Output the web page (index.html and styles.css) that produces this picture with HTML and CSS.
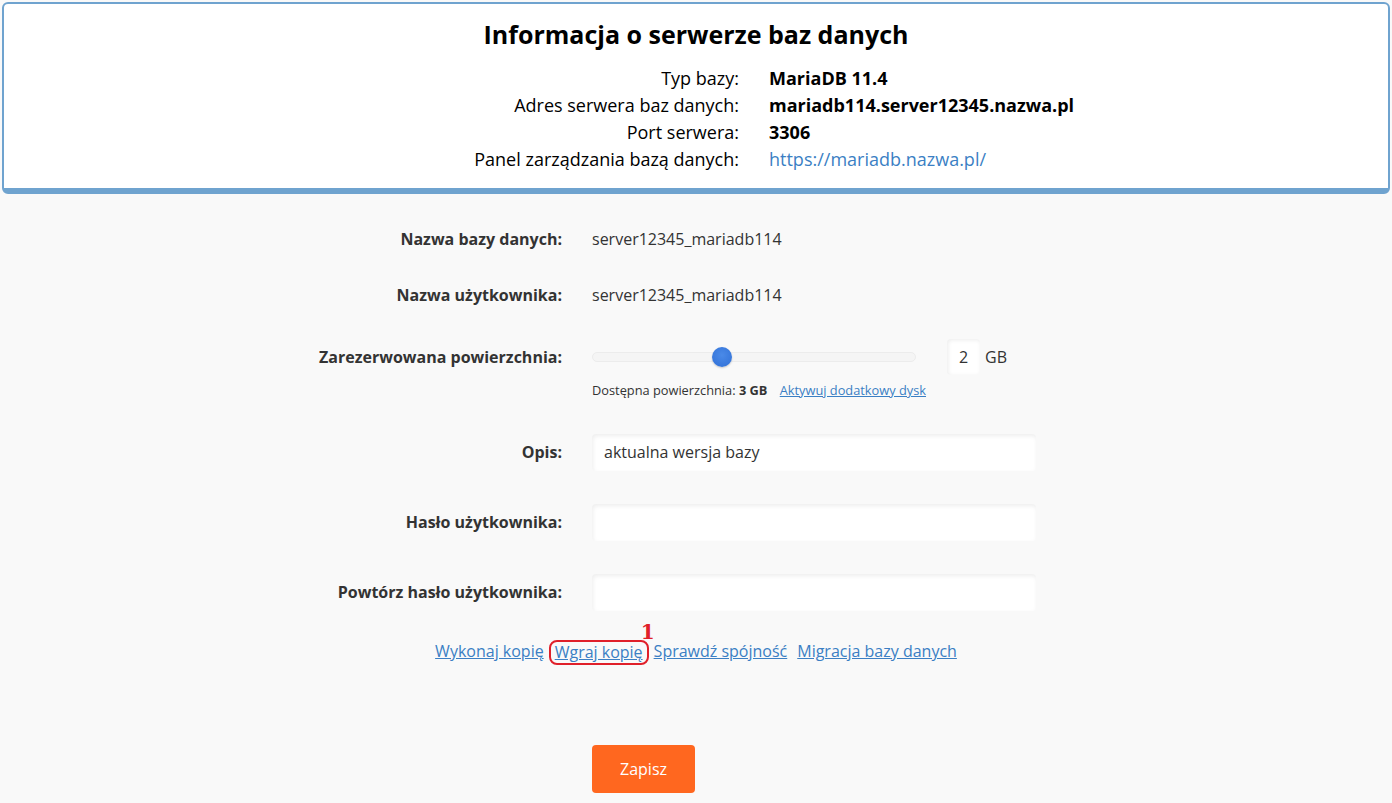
FILE: index.html
```html
<!DOCTYPE html>
<html lang="pl">
<head>
	<meta charset="UTF-8">
	<title>Baza danych</title>
	<link rel="stylesheet" href="styles.css">
</head>
<body>
    <div class="info_box">
        <h1>Informacja o serwerze baz danych</h1>
        <div class="info_list">
            <span class="info_label">Typ bazy:</span>
            <span class="info_val">MariaDB 11.4</span>
            <span class="info_label">Adres serwera baz danych:</span>
            <span class="info_val">mariadb114.server12345.nazwa.pl</span>
            <span class="info_label">Port serwera:</span>
            <span class="info_val">3306</span>
            <span class="info_label">Panel zarządzania bazą danych:</span>
            <span class="info_link"><a href="#">https://mariadb.nazwa.pl/</a></span>
        </div>
    </div>

    <div class="form_wrap">
        <div class="row row_text">
            <label class="lbl">Nazwa bazy danych:</label>
            <div class="val">server12345_mariadb114</div>
        </div>
        <div class="row row_text">
            <label class="lbl">Nazwa użytkownika:</label>
            <div class="val">server12345_mariadb114</div>
        </div>
        <div class="row row_slider">
            <label class="lbl">Zarezerwowana powierzchnia:</label>
            <div class="val">
                <div class="slider_line">
                    <div class="track"><span class="thumb"></span></div>
                    <div class="num_box">2</div>
                    <span class="unit">GB</span>
                </div>
                <div class="hint">Dostępna powierzchnia: <b>3 GB</b> <a href="#">Aktywuj dodatkowy dysk</a></div>
            </div>
        </div>
        <div class="row row_input">
            <label class="lbl">Opis:</label>
            <div class="val"><div class="field">aktualna wersja bazy</div></div>
        </div>
        <div class="row row_input">
            <label class="lbl">Hasło użytkownika:</label>
            <div class="val"><div class="field"></div></div>
        </div>
        <div class="row row_input">
            <label class="lbl">Powtórz hasło użytkownika:</label>
            <div class="val"><div class="field"></div></div>
        </div>

        <div class="links">
            <a href="#">Wykonaj kopię</a>
            <span class="mark"><a href="#">Wgraj kopię</a><i class="mark_num">1</i></span>
            <a href="#">Sprawdź spójność</a>
            <a href="#">Migracja bazy danych</a>
        </div>

        <div class="btn_row">
            <button class="save">Zapisz</button>
        </div>
    </div>
</body>
</html>
```

FILE: styles.css
```css
html, body{
	margin: 0;
	padding: 0;
}
body{
	background: #f9f9f9;
	font-family: "Open Sans", "Noto Sans", sans-serif;
	color: #333;
	height: 803px;
	overflow: hidden;
}
a{
	color: #3b7fc4;
}
.info_box{
	margin: 2px 2px 0 2px;
	background: #fff;
	border: 2px solid #6fa3cf;
	border-bottom-width: 6px;
	border-radius: 6px;
	padding: 13px 0 15px;
	color: #000;
}
.info_box h1{
	margin: 0 0 14px;
	font-size: 25px;
	line-height: 34px;
	text-align: center;
	font-weight: 700;
}
.info_list{
	display: grid;
	grid-template-columns: 735px auto;
	column-gap: 30px;
	font-size: 18px;
	line-height: 27px;
}
.info_label{
	text-align: right;
}
.info_val{
	font-weight: 700;
}
.info_link a{
	text-decoration: none;
	color: #3b7fc4;
}

.form_wrap{
	padding-top: 33px;
}
.row{
	display: flex;
	align-items: flex-start;
}
.lbl{
	width: 562px;
	flex: none;
	text-align: right;
	font-weight: 700;
	font-size: 16px;
	line-height: 24px;
	color: #333;
}
.val{
	margin-left: 30px;
	font-size: 16px;
	line-height: 24px;
	color: #333;
}
.row_text{
	height: 56px;
}
.row_slider{
	padding-top: 6px;
	height: 72px;
}
.slider_line{
	display: flex;
	align-items: center;
	height: 36px;
	margin-top: -6px;
}
.track{
	position: relative;
	width: 322px;
	height: 8px;
	border: 1px solid #ececec;
	border-radius: 5px;
	background: #f5f5f5;
}
.thumb{
	position: absolute;
	left: 119px;
	top: -6px;
	width: 20px;
	height: 20px;
	border-radius: 50%;
	background: radial-gradient(circle at 50% 40%, #4a8ae8, #2f6fd6);
	box-shadow: 0 1px 2px rgba(0,0,0,0.2);
}
.num_box{
	margin-left: 31px;
	width: 33px;
	height: 36px;
	line-height: 36px;
	text-align: center;
	background: #fff;
	border-radius: 4px;
	box-shadow: inset 1px 1px 4px rgba(0,0,0,0.08);
}
.unit{
	margin-left: 5px;
}
.hint{
	font-size: 12.8px;
	line-height: 18px;
	margin-top: 6px;
}
.hint b{
	margin-right: 9px;
}
.row_input{
	height: 70px;
	align-items: center;
}
.row_input .lbl{
	margin-top: -1px;
}
.field{
	width: 432px;
	height: 37px;
	line-height: 37px;
	padding-left: 12px;
	background: #fff;
	border-radius: 4px;
	box-shadow: inset 1px 2px 4px rgba(0,0,0,0.07);
}
.links{
	margin-top: 12px;
	display: flex;
	justify-content: center;
	gap: 10px;
	font-size: 16px;
	line-height: 24px;
}
.mark{
	position: relative;
}
.mark a{
	display: inline-block;
	padding: 0 4px 0 4px;
	margin: 1px -5px 0 -5px;
	border: 2px solid #e0202a;
	border-radius: 8px;
	line-height: 21px;
}
.mark_num{
	position: absolute;
	right: -11px;
	top: -17px;
	font-style: normal;
	font-weight: 700;
	font-family: "DejaVu Serif", serif;
	font-size: 20px;
	line-height: 20px;
	color: #e0202a;
}
.btn_row{
	margin-top: 80px;
	padding-left: 592px;
}
.save{
	width: 103px;
	height: 48px;
	border: none;
	border-radius: 4px;
	background: #ff671f;
	color: #fff;
	font-family: "Open Sans", sans-serif;
	font-size: 16px;
	cursor: pointer;
}
```
